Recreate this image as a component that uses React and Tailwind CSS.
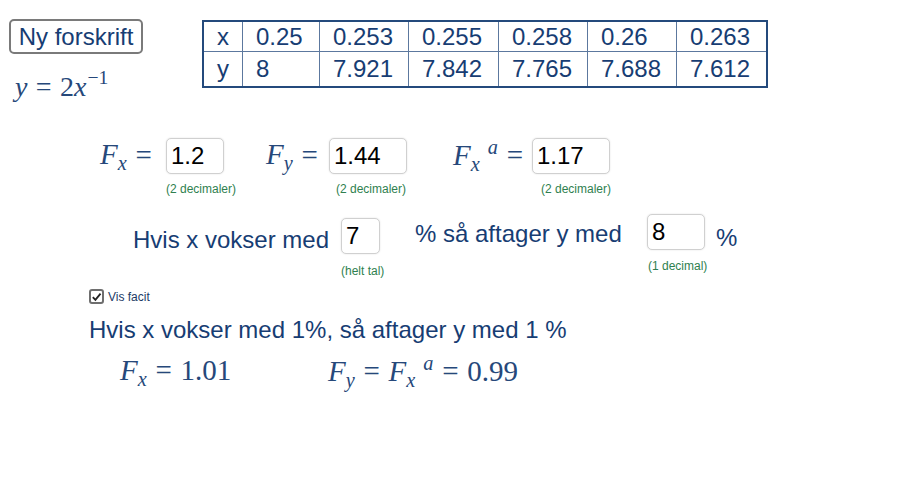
const sans = "font-['Liberation_Sans',Arial,sans-serif]";
const serif = "font-['Liberation_Serif','DejaVu_Serif',serif]";
const ink = 'text-[#173d73]';
const mathInk = 'text-[#26487a]';

const xs = ['0.25', '0.253', '0.255', '0.258', '0.26', '0.263'];
const ys = ['8', '7.921', '7.842', '7.765', '7.688', '7.612'];

const F = ({ sub, sup }) => (
  <span className="whitespace-nowrap">
    <span className="italic">F</span>
    <span className="italic text-[0.7em] align-[-0.3em]">{sub}</span>
    {sup && <span className="italic text-[0.7em] align-[0.55em] ml-[0.4em]">{sup}</span>}
  </span>
);

const Eq = () => <span className="mx-[0.3em]">=</span>;

const Box = ({ value, w }) => (
  <div
    className={`h-[36px] ${w} flex items-center rounded-[5px] border border-[#d0d0d0] bg-white pl-[4px] text-[24px] text-black shadow-[0_0_2px_rgba(0,0,0,0.12)] ${sans}`}
  >
    {value}
  </div>
);

const Hint = ({ children, className = '' }) => (
  <div className={`text-[12px] leading-[14px] text-[#2f7f4f] whitespace-nowrap ${sans} ${className}`}>
    {children}
  </div>
);

export default function App() {
  return (
    <div className={`w-[900px] h-[480px] bg-white overflow-hidden ${sans}`}>
      {/* top: button, formula, table */}
      <div className="h-[100px] flex items-start pt-[19px]">
        <div className="ml-[9px] w-[193px]">
          <button className={`h-[35px] w-[134px] rounded-[5px] border-2 border-[#7a7a7a] bg-white text-[24px] leading-none ${ink}`}>
            Ny forskrift
          </button>
          <div className={`ml-[6px] mt-[9px] text-[28px] leading-[30px] ${serif} ${mathInk}`}>
            <span className="italic">y</span>
            <Eq />
            2<span className="italic">x</span>
            <span className="text-[0.7em] align-[0.6em] ml-[1px]">−1</span>
          </div>
        </div>
        <div className={`mt-[1px] border-2 border-[#244a7c] text-[24px] ${ink}`}>
          {[['x', ...xs], ['y', ...ys]].map((row, r) => (
            <div
              key={r}
              className={`grid grid-cols-[38px_77px_89px_90px_89px_89px_90px] ${r === 0 ? 'h-[29px]' : 'h-[35px] border-t border-[#5c789e]'}`}
            >
              {row.map((v, c) => (
                <div key={c} className={`flex items-center pl-[13px] leading-none ${c > 0 ? 'border-l border-[#5c789e]' : ''}`}>
                  {v}
                </div>
              ))}
            </div>
          ))}
        </div>
      </div>

      {/* factors */}
      <div className="h-[114px] flex items-start pt-[38px]">
        <div className={`ml-[100px] w-[66px] h-[36px] flex items-center text-[29px] ${serif} ${mathInk}`}>
          <F sub="x" />
          <Eq />
        </div>
        <div className="w-[58px]">
          <Box value="1.2" w="w-[58px]" />
          <Hint className="mt-[8px]">(2 decimaler)</Hint>
        </div>
        <div className={`ml-[42px] w-[63px] h-[36px] flex items-center text-[29px] ${serif} ${mathInk}`}>
          <F sub="y" />
          <Eq />
        </div>
        <div className="w-[78px]">
          <Box value="1.44" w="w-[78px]" />
          <Hint className="mt-[8px] ml-[7px]">(2 decimaler)</Hint>
        </div>
        <div className={`ml-[46px] w-[79px] h-[36px] flex items-center text-[29px] ${serif} ${mathInk}`}>
          <F sub="x" sup="a" />
          <Eq />
        </div>
        <div className="w-[78px]">
          <Box value="1.17" w="w-[78px]" />
          <Hint className="mt-[8px] ml-[9px]">(2 decimaler)</Hint>
        </div>
      </div>

      {/* percent question */}
      <div className={`h-[75px] flex items-start text-[24px] ${ink}`}>
        <div className="ml-[133px] w-[208px] mt-[12px] leading-[28px] whitespace-nowrap">Hvis x vokser med</div>
        <div className="w-[39px] mt-[4px]">
          <Box value="7" w="w-[39px]" />
          <Hint className="mt-[10px]">(helt tal)</Hint>
        </div>
        <div className="ml-[35px] w-[232px] mt-[6px] leading-[28px] whitespace-nowrap">% så aftager y med</div>
        <div className="w-[58px]">
          <Box value="8" w="w-[58px]" />
          <Hint className="mt-[9px] ml-[1px]">(1 decimal)</Hint>
        </div>
        <div className="ml-[11px] mt-[10px] leading-[28px]">%</div>
      </div>

      {/* show answer */}
      <label className="ml-[89px] h-[15px] flex items-center gap-[4px] w-fit">
        <span className="w-[15px] h-[15px] rounded-[3px] border-2 border-[#6e6e6e] bg-white flex items-center justify-center">
          <svg viewBox="0 0 12 12" className="w-[12px] h-[12px]">
            <path d="M2 6.2 L4.8 9.2 L10.4 2.4" fill="none" stroke="#222" strokeWidth="2" />
          </svg>
        </span>
        <span className="text-[12px] leading-none text-[#1d3a66]">Vis facit</span>
      </label>

      <div className={`ml-[89px] mt-[12px] text-[24px] leading-[28px] whitespace-nowrap ${ink}`}>
        Hvis x vokser med 1%, så aftager y med 1 %
      </div>

      <div className={`mt-[10px] h-[36px] flex items-center text-[29px] ${serif} ${mathInk}`}>
        <div className="ml-[120px] w-[208px]">
          <F sub="x" />
          <Eq />
          1.01
        </div>
        <div>
          <F sub="y" />
          <Eq />
          <F sub="x" sup="a" />
          <Eq />
          0.99
        </div>
      </div>
    </div>
  );
}
